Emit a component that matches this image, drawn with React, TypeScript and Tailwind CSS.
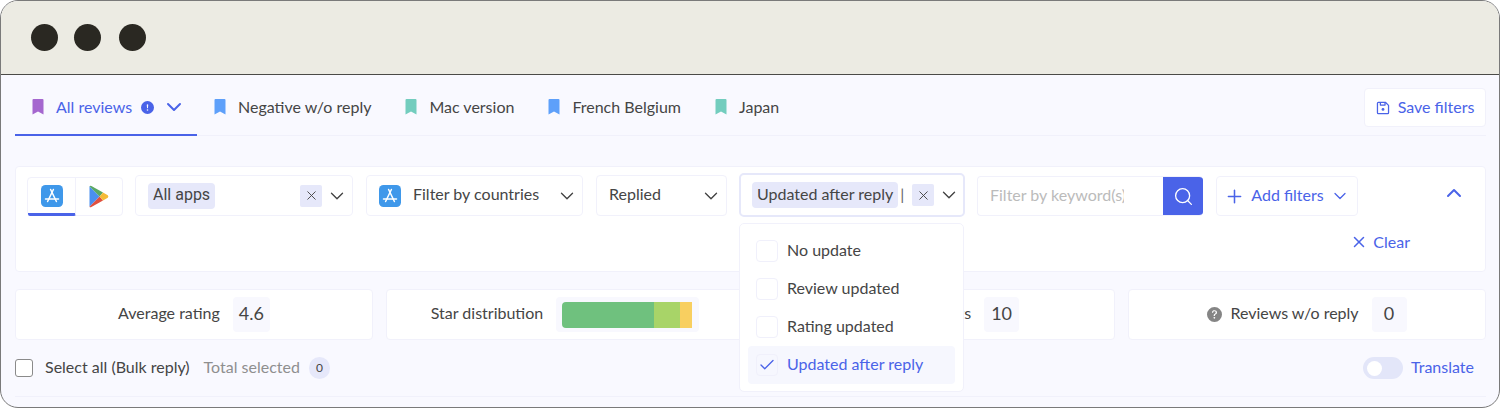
import { Check, ChevronDown, ChevronUp, Plus, Search, X } from "lucide-react";
import { BsExclamationCircleFill, BsQuestionCircleFill } from "react-icons/bs";

const font = { fontFamily: "Lato, 'Noto Sans', sans-serif" };

function Bookmark({ color }: { color: string }) {
  return (
    <svg width="12" height="16" viewBox="0 0 12 16" className="shrink-0">
      <path d="M0.5 1 Q0.5 0 1.5 0 H10.5 Q11.5 0 11.5 1 V15.5 L6 12.6 L0.5 15.5 Z" fill={color} />
    </svg>
  );
}

function SaveIcon() {
  return (
    <svg width="14" height="14" viewBox="0 0 24 24" fill="none" stroke="currentColor" strokeWidth="2.2" strokeLinejoin="round" className="mt-[2px] shrink-0">
      <path d="M4 2.5h12.5l5 5V20a1.5 1.5 0 0 1-1.5 1.5H4A1.5 1.5 0 0 1 2.5 20V4A1.5 1.5 0 0 1 4 2.5z" />
      <path d="M7.5 2.5v4.5h8V2.5" />
      <circle cx="12" cy="14.5" r="2.4" fill="currentColor" stroke="none" />
    </svg>
  );
}

function AppStoreIcon() {
  return (
    <svg width="22" height="22" viewBox="0 0 22 22" className="shrink-0">
      <rect width="22" height="22" rx="4.5" fill="#3f98ea" />
      <g stroke="#fff" strokeWidth="1.5" strokeLinecap="round" fill="none">
        <path d="M9.6 4.5 L15.4 16.5" />
        <path d="M12.4 4.5 L6.6 16.5" />
        <path d="M4.5 14 H17.5" />
      </g>
    </svg>
  );
}

function PlayIcon() {
  return (
    <svg width="20" height="23" viewBox="0 0 20 23" className="shrink-0">
      <path d="M0.5 1.2 V21.8 L10.6 11.5 Z" fill="#4a8ff0" />
      <path d="M0.5 1.2 Q1 0.3 2.4 0.9 L14 7.6 L10.6 11.5 Z" fill="#5aa864" />
      <path d="M0.5 21.8 Q1 22.7 2.4 22.1 L14 15.4 L10.6 11.5 Z" fill="#e0503f" />
      <path d="M14 7.6 L18.8 10.3 Q20 11.5 18.8 12.7 L14 15.4 L10.6 11.5 Z" fill="#f5bb37" />
    </svg>
  );
}

function Tab({ color, label }: { color: string; label: string }) {
  return (
    <div className="flex h-full items-center gap-3 px-[17px] pt-[3px] text-[16px] text-[#454545]">
      <Bookmark color={color} />
      <span>{label}</span>
    </div>
  );
}

function Stat({ label, children, icon }: { label: string; children: React.ReactNode; icon?: boolean }) {
  return (
    <div className="flex h-[51px] flex-1 items-center justify-center gap-[13px] rounded-[4px] border border-[#f1f1fb] bg-white text-[16px] text-[#454545]">
      <div className="flex items-center gap-2">
        {icon && <BsQuestionCircleFill size={15} className="text-[#858585]" />}
        <span className="pb-[3px]">{label}</span>
      </div>
      {children}
    </div>
  );
}

function Value({ children }: { children: React.ReactNode }) {
  return (
    <span className="flex h-[35px] min-w-[35px] items-center justify-center rounded-[4px] bg-[#f8f8fe] px-[6px] pb-[3px] text-[18px] text-[#454545]">
      {children}
    </span>
  );
}

function MenuItem({ label, active }: { label: string; active?: boolean }) {
  return (
    <div className={`flex h-[38px] items-center gap-[9px] rounded-[4px] px-2 text-[16px] ${active ? "bg-[#f6f7fe] text-[#4a63e8]" : "text-[#454545]"}`}>
      <span className="flex h-[22px] w-[22px] items-center justify-center rounded-[4px] border border-[#f0f0fb]">
        {active && <Check size={18} strokeWidth={1.75} />}
      </span>
      <span className="pb-[3px]">{label}</span>
    </div>
  );
}

export default function App() {
  return (
    <div style={font} className="flex h-[408px] w-[1500px] flex-col overflow-hidden rounded-[18px] border border-[#7a7a7a] bg-[#f9f9ff]">
      {/* Window bar */}
      <div className="flex h-[74px] shrink-0 items-center border-b border-[#4b4b47] bg-[#ecebe3] pl-[30px]">
        <span className="h-[27px] w-[27px] rounded-full bg-[#2a2822]" />
        <span className="ml-[16px] h-[27px] w-[27px] rounded-full bg-[#2a2822]" />
        <span className="ml-[18px] h-[27px] w-[27px] rounded-full bg-[#2a2822]" />
      </div>

      {/* Saved filter tabs */}
      <div className="ml-[14px] mr-[13px] flex h-[61px] shrink-0 items-center border-b border-[#f1f1fb]">
        <div className="-mb-px flex h-full w-[182px] items-center border-b-2 border-[#4a63e8] pl-[17px] pt-[4px] text-[16px] text-[#4a63e8]">
          <Bookmark color="#a567cf" />
          <span className="ml-3">All reviews</span>
          <BsExclamationCircleFill size={13} className="ml-[9px] mt-[2px]" />
          <ChevronDown size={24} strokeWidth={2} className="ml-[8px]" />
        </div>
        <Tab color="#5ea0fa" label="Negative w/o reply" />
        <Tab color="#73cdbe" label="Mac version" />
        <Tab color="#5ea0fa" label="French Belgium" />
        <Tab color="#73cdbe" label="Japan" />
        <button className="ml-auto mt-[5px] flex h-[39px] w-[122px] items-center justify-center gap-[8px] rounded-[4px] border border-[#f1f1fb] bg-white pb-[2px] text-[16px] text-[#4a63e8]">
          <SaveIcon />
          Save filters
        </button>
      </div>

      {/* Filters */}
      <div className="ml-[14px] mr-[13px] mt-[30px] h-[106px] shrink-0 rounded-[4px] border border-[#f1f1fb] bg-white px-[11px]">
        <div className="mt-[6px] flex items-start gap-[12px]">
          <div className="mt-[4px] flex h-[39px] w-[96px] rounded-[4px] border border-[#f1f1fb]">
            <div className="-mb-px flex w-[48px] items-center justify-center rounded-b-[2px] border-b-[3px] border-r border-b-[#4a63e8] border-r-[#f1f1fb]">
              <AppStoreIcon />
            </div>
            <div className="flex flex-1 items-center justify-center">
              <PlayIcon />
            </div>
          </div>

          <div className="mt-[2px] flex h-[41px] w-[218px] items-center rounded-[4px] border border-[#f1f1fb] pl-[12px] pr-[4px] text-[16px] text-[#454545]">
            <span style={{ fontFamily: "Roboto, sans-serif" }} className="rounded-[4px] bg-[#e6e8fa] px-[5px] pb-[4px] pt-[2px] leading-[20px]">All apps</span>
            <span className="ml-auto flex h-[22px] w-[22px] items-center justify-center rounded-[2px] bg-[#e6e8fa]">
              <X size={15} strokeWidth={1.5} />
            </span>
            <ChevronDown size={22} strokeWidth={1.5} className="ml-[4px]" />
          </div>

          <div className="ml-px mt-[2px] flex h-[41px] w-[217px] items-center rounded-[4px] border border-[#f1f1fb] pl-[12px] pr-[4px] text-[16px] text-[#454545]">
            <AppStoreIcon />
            <span className="ml-[12px] pb-[3px]">Filter by countries</span>
            <ChevronDown size={22} strokeWidth={1.5} className="ml-auto" />
          </div>

          <div className="ml-px mt-[2px] flex h-[41px] w-[131px] items-center rounded-[4px] border border-[#f1f1fb] pl-[12px] pr-[4px] text-[16px] text-[#454545]">
            <span className="pb-[3px]">Replied</span>
            <ChevronDown size={22} strokeWidth={1.5} className="ml-auto" />
          </div>

          <div className="relative flex h-[44px] w-[226px] items-center rounded-[5px] border-2 border-[#e6e8fa] pl-[11px] pr-[3px] text-[16px] text-[#454545]">
            <span className="whitespace-nowrap rounded-[4px] bg-[#e6e8fa] px-[5px] pb-[4px] pt-[2px] leading-[20px]">Updated after reply</span>
            <span className="ml-[2px] pb-[2px] text-[#666]">|</span>
            <span className="ml-auto flex h-[22px] w-[22px] items-center justify-center rounded-[2px] bg-[#e6e8fa]">
              <X size={15} strokeWidth={1.5} />
            </span>
            <ChevronDown size={22} strokeWidth={1.5} className="ml-[4px]" />

            {/* Open dropdown */}
            <div className="absolute left-[-2px] top-[48px] z-10 w-[225px] rounded-[5px] border border-[#f1f1fb] bg-white px-2 pb-[7px] pt-[8px]">
              <MenuItem label="No update" />
              <MenuItem label="Review updated" />
              <MenuItem label="Rating updated" />
              <MenuItem label="Updated after reply" active />
            </div>
          </div>

          <div className="mt-[3px] flex h-[40px] w-[226px] items-center overflow-hidden rounded-[4px] border border-r-0 border-[#f1f1fb] text-[16px] text-[#bbbbbb]">
            <span className="ml-[12px] w-[134px] overflow-hidden whitespace-nowrap pb-[2px]">Filter by keyword(s)</span>
            <span className="ml-auto flex h-full w-[40px] items-center justify-center bg-[#4a63e8] text-white">
              <Search size={21} strokeWidth={1.5} />
            </span>
          </div>

          <button className="ml-px mt-[3px] flex h-[40px] w-[142px] items-center justify-center rounded-[4px] border border-[#f1f1fb] text-[16px] text-[#4a63e8]">
            <Plus size={21} strokeWidth={1.75} />
            <span className="ml-[6px] pb-[2px]">Add filters</span>
            <ChevronDown size={20} strokeWidth={1.5} className="ml-[6px]" />
          </button>

          <ChevronUp size={24} strokeWidth={2} className="ml-auto mr-[8px] mt-[8px] text-[#4a63e8]" />
        </div>
        <div className="mt-[13px] flex justify-end pr-[64px] text-[16px] text-[#4a63e8]">
          <div className="flex items-center gap-[5px]">
            <X size={18} strokeWidth={2} />
            Clear
          </div>
        </div>
      </div>

      {/* Stats */}
      <div className="ml-[14px] mr-[13px] mt-[17px] flex shrink-0 gap-[13px]">
        <Stat label="Average rating">
          <Value>4.6</Value>
        </Stat>
        <Stat label="Star distribution">
          <span className="flex h-[35px] w-[143px] items-center rounded-[4px] bg-[#f8f8fe] px-[6px]">
            <span className="flex h-[26px] w-[130px] overflow-hidden rounded-l-[4px]">
              <span className="w-[92px] bg-[#6fc17e]" />
              <span className="w-[26px] bg-[#a8d468]" />
              <span className="w-[12px] bg-[#f8cf60]" />
            </span>
          </span>
        </Stat>
        <Stat label="Updated reviews">
          <Value>10</Value>
        </Stat>
        <Stat label="Reviews w/o reply" icon>
          <Value>0</Value>
        </Stat>
      </div>

      {/* Bulk actions */}
      <div className="ml-[14px] mr-[13px] mt-[16px] flex h-[24px] shrink-0 items-center text-[16px]">
        <span className="h-[18px] w-[18px] rounded-[3px] border border-[#8a8a8a] bg-white" />
        <span className="ml-[12px] pb-[2px] text-[#454545]">Select all (Bulk reply)</span>
        <span className="ml-[14px] pb-[2px] text-[#8f8f8f]">Total selected</span>
        <span className="ml-[9px] flex h-[22px] w-[21px] items-center justify-center rounded-full bg-[#e6e8fa] text-[12px] text-[#454545]">0</span>
        <span className="ml-auto flex h-[22px] w-[40px] items-center rounded-full bg-[#e3e6f9] pl-[4px]">
          <span className="h-[15px] w-[15px] rounded-full bg-white" />
        </span>
        <span className="ml-[8px] mr-[12px] pb-[2px] text-[#4a63e8]">Translate</span>
      </div>
      <div className="ml-[14px] mr-[13px] mt-[16px] shrink-0 border-b border-[#f1f1fb]" />
    </div>
  );
}
